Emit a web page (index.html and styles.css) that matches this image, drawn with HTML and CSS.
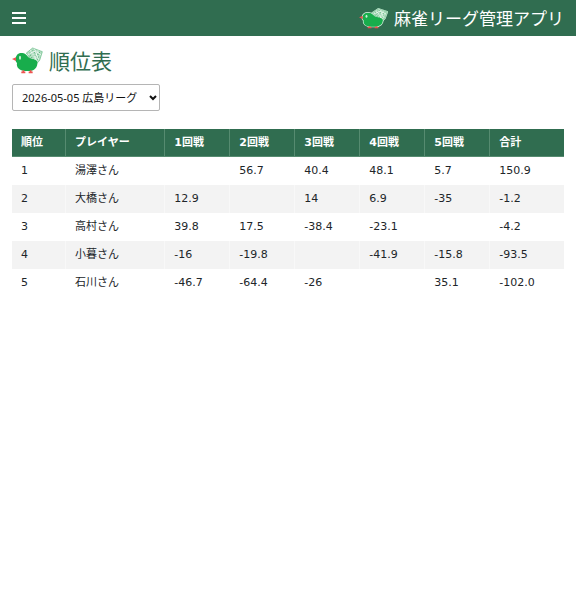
FILE: index.html
```html
<!DOCTYPE html>
<html lang="ja">
<head>
<meta charset="utf-8">
<meta name="viewport" content="width=device-width, initial-scale=1">
<title>麻雀リーグ管理アプリ</title>
<link rel="stylesheet" href="styles.css">
</head>
<body>
<svg class="defs" aria-hidden="true">
  <symbol id="bird" viewBox="0 0 93 81" preserveAspectRatio="none">
    <g class="outline">
      <path d="M43 18 62 3 91 14 83 40 73 51 53 32Z"/>
      <path d="M11 35C12 22 21 17 31 18C43 19 47 30 54 34C62 38 72 37 76 44C78 61 67 72 49 72H39C23 72 12 61 15 48C11 44 10 40 11 35Z"/>
    </g>
    <path fill="#b5dfc4" stroke="#62ba82" stroke-width="2" d="M43 18 62 3 91 14 83 40 73 51 53 32Z"/>
    <path fill="none" stroke="#48ad6c" stroke-width="3" stroke-dasharray="5 4" d="M51 20 64 9 84 17M53 27 65 16 83 24M57 34 66 24 81 31M63 40 69 32 78 38"/>
    <path fill="none" stroke="#fff" stroke-width="2" d="M55 9 76 44M66 5 80 38M78 10 67 42M47 23 71 11 87 24"/>
    <path fill="#18ad4c" d="M11 35C12 22 21 17 31 18C43 19 47 30 54 34C62 38 72 37 76 44C78 61 67 72 49 72H39C23 72 12 61 15 48C11 44 10 40 11 35Z"/>
    <path fill="#ef5350" d="M0 36 12 31 12 42Z"/>
    <ellipse cx="24" cy="32" rx="3" ry="6" fill="#c8f0d5"/>
    <path fill="none" stroke="#ef5350" stroke-width="5" d="M34 70v5m-6 1h12M56 70v5m-6 1h12"/>
  </symbol>
</svg>
<header class="topbar">
  <button class="menu" type="button" aria-label="メニュー">
    <svg viewBox="0 0 14 12" aria-hidden="true"><path d="M0 0h14v2H0zM0 5h14v2H0zM0 10h14v2H0z"/></svg>
  </button>
  <a class="brand" href="#">
    <svg class="bird bird-light" aria-hidden="true"><use href="#bird"/></svg>
    <span>麻雀リーグ管理アプリ</span>
  </a>
</header>
<main>
  <h1><svg class="bird" aria-hidden="true"><use href="#bird"/></svg><span>順位表</span></h1>
  <div class="picker">
    <select aria-label="リーグ"><option>2026-05-05 広島リーグ</option></select>
    <svg class="chevron" viewBox="0 0 8 6" aria-hidden="true"><path d="M1 1l3 3 3-3"/></svg>
  </div>
  <table>
    <colgroup><col class="rank"><col class="player"><col class="game"><col class="game"><col class="game"><col class="game"><col class="game"><col></colgroup>
    <thead>
      <tr><th>順位</th><th>プレイヤー</th><th>1回戦</th><th>2回戦</th><th>3回戦</th><th>4回戦</th><th>5回戦</th><th>合計</th></tr>
    </thead>
    <tbody>
      <tr><td>1</td><td>湯澤さん</td><td></td><td>56.7</td><td>40.4</td><td>48.1</td><td>5.7</td><td>150.9</td></tr>
      <tr><td>2</td><td>大橋さん</td><td>12.9</td><td></td><td>14</td><td>6.9</td><td>-35</td><td>-1.2</td></tr>
      <tr><td>3</td><td>高村さん</td><td>39.8</td><td>17.5</td><td>-38.4</td><td>-23.1</td><td></td><td>-4.2</td></tr>
      <tr><td>4</td><td>小暮さん</td><td>-16</td><td>-19.8</td><td></td><td>-41.9</td><td>-15.8</td><td>-93.5</td></tr>
      <tr><td>5</td><td>石川さん</td><td>-46.7</td><td>-64.4</td><td>-26</td><td></td><td>35.1</td><td>-102.0</td></tr>
    </tbody>
  </table>
</main>
</body>
</html>
```
FILE: styles.css
```css
* { box-sizing: border-box; }

body {
  margin: 0;
  background: #fff;
  color: #212529;
  font-family: "DejaVu Sans", "Noto Sans CJK JP", sans-serif;
  font-size: 11px;
}

.defs { position: absolute; width: 0; height: 0; }

.topbar {
  display: flex;
  align-items: center;
  justify-content: space-between;
  height: 36px;
  padding: 0 12px;
  background: #306d50;
}

.menu {
  display: flex;
  padding: 0;
  border: 0;
  background: none;
}

.menu svg { width: 14px; height: 12px; fill: #fff; }

.brand {
  display: flex;
  align-items: center;
  gap: 6px;
  color: #fff;
  font: 17px/24px "Noto Sans CJK JP", sans-serif;
  text-decoration: none;
}

.bird { width: 31px; height: 27px; }

.bird-light {
  --outline: #dff3e6;
  width: 29px;
  height: 21px;
}

.outline {
  fill: none;
  stroke: var(--outline, none);
  stroke-width: 5;
}

main { padding: 11px 12px; }

h1 {
  display: flex;
  align-items: center;
  gap: 6px;
  height: 26px;
  margin: 0 0 11px;
  color: #306d50;
  font: 400 21px/24px "Noto Sans CJK JP", sans-serif;
}

.picker {
  display: grid;
  width: 148px;
  margin-bottom: 18px;
}

.picker select {
  grid-area: 1 / 1;
  height: 27px;
  padding: 0 9px;
  border: 1px solid #b5b5b5;
  border-radius: 2px;
  background: #fff;
  color: #111;
  font: 11px "Noto Sans", "Noto Sans CJK JP", sans-serif;
  appearance: none;
}

.chevron {
  grid-area: 1 / 1;
  place-self: center end;
  width: 8px;
  height: 6px;
  margin-right: 3px;
  fill: none;
  stroke: #111;
  stroke-width: 2;
  pointer-events: none;
}

table {
  width: 100%;
  border-collapse: separate;
  border-spacing: 0;
  table-layout: fixed;
}

.rank { width: 54px; }
.player { width: 18%; }
.game { width: 65px; }

th, td {
  height: 28px;
  padding: 0 9px;
  border-right: 1px solid #f8f8f8;
  line-height: 16px;
  text-align: left;
  white-space: nowrap;
}

td { border-right-color: transparent; }

th {
  border-right-color: #568b70;
  border-bottom: 1px solid #568b70;
  background: #306d50;
  color: #fff;
}

th:last-child { border-right: 0; }

tbody tr:nth-child(even) { background: #f3f3f3; }

tbody tr:nth-child(even) td:not(:last-child) { border-right-color: #f8f8f8; }
```
